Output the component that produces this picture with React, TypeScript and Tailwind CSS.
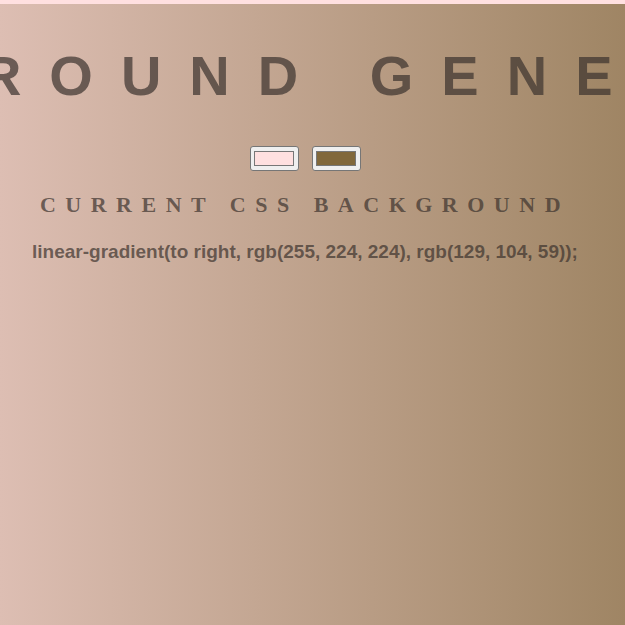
import React from "react";

function Swatch({ color }: { color: string }) {
  return (
    <div className="w-[49px] h-[25px] bg-[#efefef] border border-[#767676] rounded-[3px] flex items-center justify-center">
      <div className="w-[40px] h-[15px] border border-[#777777]" style={{ backgroundColor: color }} />
    </div>
  );
}

export default function App() {
  return (
    <div className="min-h-screen w-full overflow-hidden bg-[linear-gradient(to_right,#ddbeb3,#9f8564)] text-[#3b322d]/70">
      <div className="h-[4px] w-full bg-[#ffe0e0]" />
      <div className="w-[610px] flex flex-col items-center">
        <div className="mt-[40px] w-full flex justify-center">
          <h1 className="whitespace-nowrap shrink-0 font-['Liberation_Sans',Arial,sans-serif] font-bold text-[56px] leading-[64px] tracking-[28px]">
            BACKGROUND GENERATOR
          </h1>
        </div>
        <div className="mt-[38px] flex gap-[13px]">
          <Swatch color="#ffe0e0" />
          <Swatch color="#81683b" />
        </div>
        <h3 className="mt-[22px] font-['Liberation_Serif','Times_New_Roman',serif] font-bold text-[22px] leading-[24px] tracking-[9.5px] whitespace-nowrap">
          CURRENT CSS BACKGROUND
        </h3>
        <p className="mt-[24px] font-['Liberation_Sans',Arial,sans-serif] font-bold text-[19px] leading-[22px] whitespace-nowrap">
          linear-gradient(to right, rgb(255, 224, 224), rgb(129, 104, 59));
        </p>
      </div>
    </div>
  );
}
